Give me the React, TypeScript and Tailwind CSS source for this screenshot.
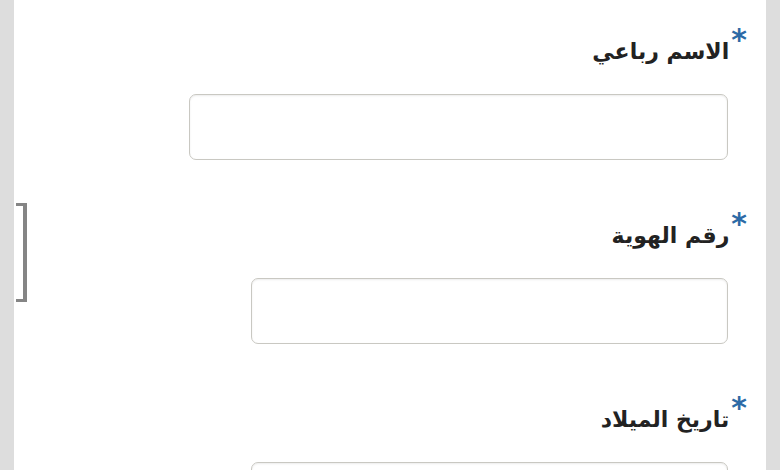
import React from 'react';

// Required-field form: label with a blue star, then a rounded text box
const fields = [
  { label: 'الاسم رباعي', width: 'w-[539px]' },
  { label: 'رقم الهوية', width: 'w-[477px]' },
  { label: 'تاريخ الميلاد', width: 'w-[477px]' },
];

const App: React.FC = () => {
  return (
    <div className="w-[780px] h-[470px] overflow-hidden flex bg-[#dddddd]" style={{ fontFamily: '"DejaVu Sans", "Liberation Sans", sans-serif' }}>
      <div className="w-[14px] shrink-0 bg-[#dddddd]" />
      <div className="flex-1 bg-white flex">
        {/* side bracket */}
        <div className="w-[40px] shrink-0 pl-[2px] pt-[203px]">
          <div className="w-[11px] h-[99px] border-r-[4px] border-y-[3px] border-[#858585]" />
        </div>
        <div className="flex-1 flex flex-col items-start pr-[38px] pt-[25px]" dir="rtl">
          {fields.map((f, i) => (
            <div key={i} className="flex flex-col items-start h-[184px] shrink-0">
              <div className="flex items-start h-[69px]">
                <span className="text-[#2d6aa6] text-[30px] font-bold leading-[30px] mr-[-19px] ml-[2px]">*</span>
                <label className="text-[#222222] text-[22px] font-bold leading-[30px] mt-[12px]">{f.label}</label>
              </div>
              <input
                type="text"
                className={`${f.width} h-[66px] rounded-[7px] border border-[#c9c8c2] bg-white shadow-[inset_0_1px_2px_rgba(0,0,0,0.08)] outline-none`}
              />
            </div>
          ))}
        </div>
      </div>
      <div className="w-[14px] shrink-0 bg-[#dddddd]" />
    </div>
  );
};

export default App;
